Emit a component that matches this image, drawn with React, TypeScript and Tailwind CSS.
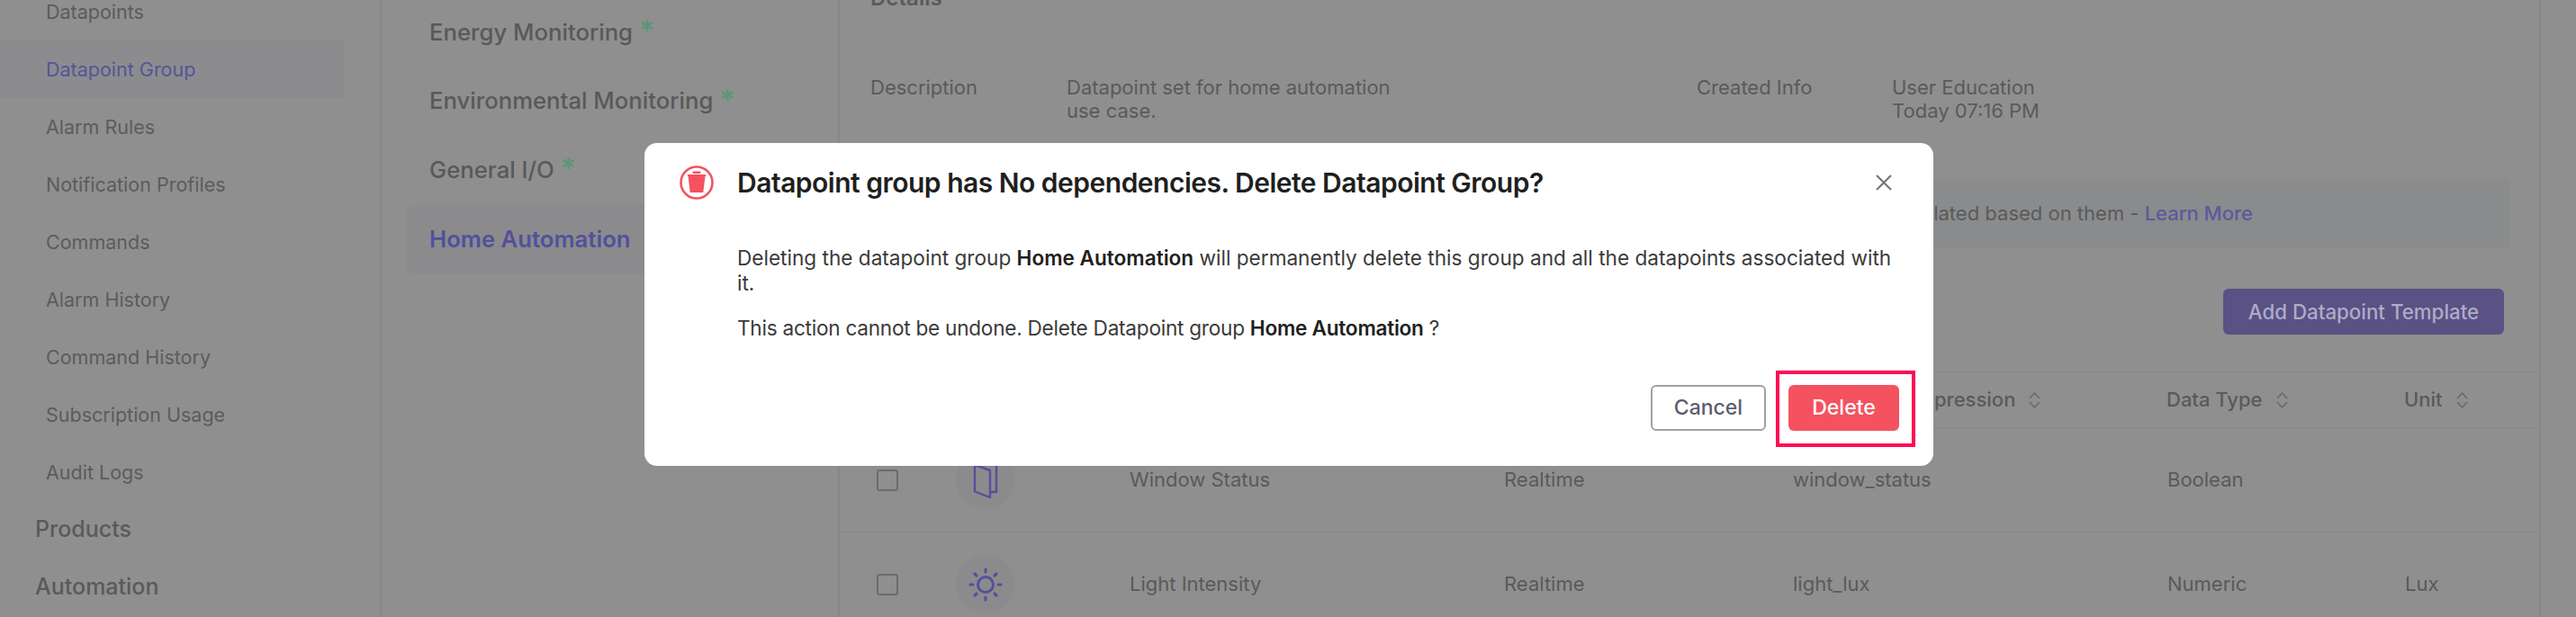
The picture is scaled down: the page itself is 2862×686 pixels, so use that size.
import React from 'react';

const navItems = ['Datapoints', 'Datapoint Group', 'Alarm Rules', 'Notification Profiles', 'Commands', 'Alarm History', 'Command History', 'Subscription Usage', 'Audit Logs'];
const groups = ['Energy Monitoring', 'Environmental Monitoring', 'General I/O'];

const SortIcon = () => (
  <svg className="ml-[14px] h-[18px] w-[15px]" viewBox="0 0 15 18" fill="none" stroke="#6a6a6a" strokeWidth="1.6">
    <path d="M2 7l5.5-6L13 7" />
    <path d="M2 11l5.5 6L13 11" />
  </svg>
);

const Checkbox = () => <div className="h-[24px] w-[24px] rounded-[3px] border-2 border-[#6c6c6c]" />;

const WindowIcon = () => (
  <svg className="h-[40px] w-[30px]" viewBox="0 0 30 40" fill="none" stroke="#55509a" strokeWidth="2.4" strokeLinejoin="round">
    <path d="M3 3l17 6v30L3 32.500z" />
    <path d="M20 33h7V3H3" />
  </svg>
);

const SunIcon = () => (
  <svg className="h-[38px] w-[38px]" viewBox="0 0 38 38" fill="none" stroke="#55509a" strokeLinecap="round">
    <circle cx="19" cy="19" r="8.500" strokeWidth="3" />
    <g strokeWidth="3.200">
      <path d="M19 2v3M19 33v3M2 19h3M33 19h3M7 7l2 2M29 29l2 2M31 7l-2 2M9 29l-2 2" />
    </g>
  </svg>
);

const TrashBadge = () => (
  <svg className="h-[38px] w-[38px] shrink-0" viewBox="0 0 38 38" fill="none">
    <circle cx="19" cy="19" r="17.500" stroke="#f4525f" strokeWidth="2.600" />
    <path d="M9.500 11.500h19l-2.200 18.500h-14.600z" fill="#f4525f" />
    <rect x="14.500" y="6.500" width="9" height="2.500" rx="1.200" fill="#f4525f" />
    <rect x="9" y="10" width="20" height="2" fill="#f4525f" />
  </svg>
);

const Row = ({ icon, name, kind, expr, dataType, unit }: { icon: React.ReactNode; name: string; kind: string; expr: string; dataType: string; unit: string }) => (
  <div className="grid h-[116px] grid-cols-[41px_88px_65px_128px_416px_321px_416px_264px_1fr] items-center border-b border-[#878787] text-[22px] text-[#5a5a5a]">
    <div />
    <Checkbox />
    <div className="flex h-[65px] w-[65px] items-center justify-center rounded-full bg-[#8b8b8d]">{icon}</div>
    <div />
    <div>{name}</div>
    <div>{kind}</div>
    <div>{expr}</div>
    <div>{dataType}</div>
    <div>{unit}</div>
  </div>
);

export default function App() {
  return (
    <div className="relative flex h-[686px] w-[2862px] overflow-hidden bg-[#8f8f8f] font-['Inter',sans-serif]">
      {/* Left nav */}
      <div className="w-[424px] shrink-0 border-r-2 border-[#878787]">
        <div className="-mt-[19px] w-[383px]">
          {navItems.map(item => (
            <div
              key={item}
              className={`flex h-[64px] items-center pl-[51px] text-[21.500px] ${item === 'Datapoint Group' ? 'bg-[#8c8c8e] text-[#57549a]' : 'text-[#5c5c5c]'}`}
            >
              {item}
            </div>
          ))}
          {['Products', 'Automation'].map(item => (
            <div key={item} className="flex h-[64px] items-center pl-[39px] text-[25px] font-medium text-[#5a5a5a]">
              {item}
            </div>
          ))}
        </div>
      </div>

      {/* Group list */}
      <div className="w-[509px] shrink-0 border-r-2 border-[#878787] pl-[27px] pr-[30px]">
        <div className="-mt-[2px]">
          {groups.map(g => (
            <div key={g} className="flex h-[76.500px] items-center pl-[26px] text-[25.700px] font-medium text-[#595959]">
              {g}
              <span className="ml-[7px] -translate-y-[1px] text-[32px] font-semibold leading-none text-[#5b9775]">*</span>
            </div>
          ))}
          <div className="flex h-[77px] items-center rounded-[10px] bg-[#8b8b8d] pl-[26px] text-[25.700px] font-semibold text-[#52509c]">
            Home Automation
          </div>
        </div>
      </div>

      {/* Detail */}
      <div className="w-[1890px] shrink-0 border-r-2 border-[#878787]">
        <div className="-mt-[20px] pl-[34px] text-[24px] font-semibold leading-[36px] text-[#5a5a5a]">Details</div>
        <div className="mt-[68px] grid grid-cols-[218px_700px_217px_1fr] pl-[34px] text-[22px] leading-[26px] text-[#5a5a5a]">
          <div>Description</div>
          <div className="w-[400px]">Datapoint set for home automation use case.</div>
          <div>Created Info</div>
          <div>
            User Education
            <br />
            Today 07:16 PM
          </div>
        </div>
        <div className="ml-[34px] mr-[33px] mt-[63px] flex h-[77px] items-center justify-end rounded-[4px] bg-[#8a8b8d] pr-[285px] text-[22px] text-[#5a5a5a]">
          Datapoint templates and the widgets are populated based on them -&nbsp;<span className="font-medium text-[#5a5a9c]">Learn More</span>
        </div>
        <div className="mr-[39px] mt-[45px] flex justify-end">
          <div className="flex h-[51px] w-[312px] items-center justify-center rounded-[6px] bg-[#5a5184] text-[22.300px] font-medium text-[#aeacc6]">
            Add Datapoint Template
          </div>
        </div>

        {/* Table */}
        <div className="mt-[41px] grid h-[63px] grid-cols-[322px_415px_321px_416px_264px_1fr] items-center border-y border-[#878787] text-[22px] font-medium text-[#5a5a5a]">
          <div />
          <div className="flex items-center">Display Name</div>
          <div className="flex items-center">Type</div>
          <div className="flex items-center pl-[25px]">Datapoint Expression<SortIcon /></div>
          <div className="flex items-center">Data Type<SortIcon /></div>
          <div className="flex items-center">Unit<SortIcon /></div>
        </div>
        <Row icon={<WindowIcon />} name="Window Status" kind="Realtime" expr="window_status" dataType="Boolean" unit="" />
        <Row icon={<SunIcon />} name="Light Intensity" kind="Realtime" expr="light_lux" dataType="Numeric" unit="Lux" />
      </div>

      {/* Confirm dialog */}
      <div className="absolute left-[716px] top-[159px] h-[359px] w-[1432px] rounded-[14px] bg-white pl-[39px] pr-[38px]">
        <div className="flex h-[88px] items-center">
          <TrashBadge />
          <div className="ml-[26px] text-[30px] font-semibold tracking-[-0.5px] text-[#1f1f1f]">Datapoint group has No dependencies. Delete Datapoint Group?</div>
          <svg className="ml-auto mr-[7px] h-[20px] w-[20px]" viewBox="0 0 20 20" fill="none" stroke="#777777" strokeWidth="2.200">
            <path d="M2 2l16 16M18 2L2 18" />
          </svg>
        </div>
        <div className="ml-[64px] mt-[26px] text-[22.600px] leading-[28px] text-[#3a3a3a]">
          <p>
            Deleting the datapoint group <span className="font-semibold text-[#1f1f1f]">Home Automation</span> will permanently delete this group and all the datapoints associated with it.
          </p>
          <p className="mt-[22px] tracking-[-0.25px]">
            This action cannot be undone. Delete Datapoint group <span className="font-semibold text-[#1f1f1f]">Home Automation</span> ?
          </p>
        </div>
        <div className="mt-[49px] flex justify-end gap-[25px]">
          <div className="flex h-[51px] w-[128px] items-center justify-center rounded-[6px] border-2 border-[#a0a0a6] text-[23px] font-medium text-[#5d5d6e]">Cancel</div>
          <div className="flex h-[51px] w-[123px] items-center justify-center rounded-[6px] bg-[#f4525f] text-[23px] font-medium text-white">Delete</div>
        </div>
      </div>

      {/* Annotation around the delete button */}
      <div className="absolute left-[1973px] top-[412px] h-[85px] w-[155px] border-[4px] border-[#ff0a54]" />
    </div>
  );
}
